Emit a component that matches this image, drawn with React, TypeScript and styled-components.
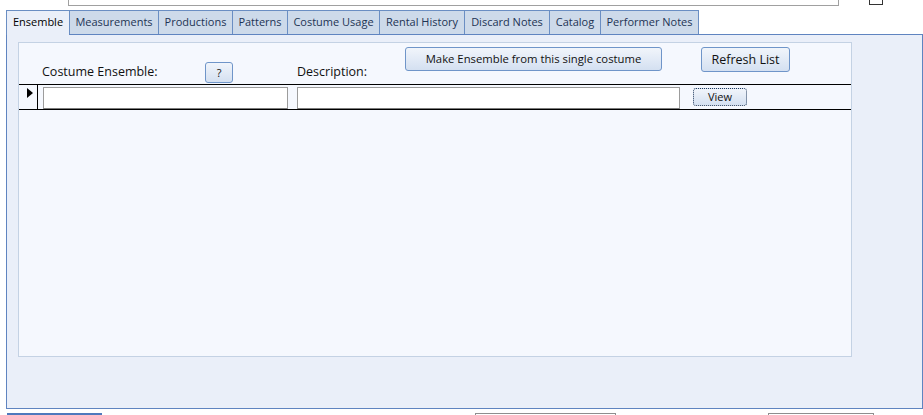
import styled, { createGlobalStyle } from "styled-components";

const GlobalStyle = createGlobalStyle`
  html, body {
    margin: 0;
    padding: 0;
    background: #ffffff;
  }
  body {
    font-family: "Open Sans", "Noto Sans", sans-serif;
    color: #111;
  }
`;

const Screen = styled.div`
  width: 923px;
  height: 415px;
  overflow: hidden;
  background: #ffffff;
  display: flex;
  flex-direction: column;
`;

// the cut-off controls above the tab control
const TopRow = styled.div`
  display: flex;
  height: 10px;
`;

const CutBox = styled.div<{ $left: number; $width: number; $height: number }>`
  box-sizing: border-box;
  margin-left: ${(p) => p.$left}px;
  width: ${(p) => p.$width}px;
  height: ${(p) => p.$height}px;
  border: 1px solid ${(p) => (p.$height < 6 ? "#333" : "#a0a0a0")};
  border-top: none;
  background: #fff;
`;

const TabStrip = styled.div`
  display: flex;
  align-items: flex-start;
  height: 24px;
  margin-left: 6px;
`;

const Tab = styled.div<{ $w: number; $active?: boolean; $last?: boolean }>`
  box-sizing: border-box;
  position: relative;
  z-index: ${(p) => (p.$active ? 2 : 1)};
  width: ${(p) => p.$w}px;
  height: ${(p) => (p.$active ? 25 : 24)}px;
  border-top: 1px solid #6a8ec3;
  border-left: 1px solid #6a8ec3;
  border-right: ${(p) => (p.$last ? "1px solid #6a8ec3" : "none")};
  background: ${(p) => (p.$active ? "#eaeff9" : "#cddaea")};
  color: ${(p) => (p.$active ? "#000" : "#1d3454")};
  font-size: 11px;
  line-height: 22px;
  text-align: center;
  white-space: nowrap;
`;

const Panel = styled.div`
  box-sizing: border-box;
  width: 917px;
  height: 375px;
  margin-left: 6px;
  border: 1px solid #5f84c0;
  background: #eaeff9;
  padding: 7px 0 0 11px;
`;

const Subform = styled.div`
  box-sizing: border-box;
  width: 834px;
  height: 315px;
  border: 1px solid #c4d2e4;
  background: #f5f8fe;
  display: flex;
  flex-direction: column;
`;

const Header = styled.div`
  display: flex;
  align-items: flex-start;
  height: 41px;
  border-bottom: 1px solid #000;
`;

const Label = styled.div<{ $left: number; $width: number }>`
  margin-left: ${(p) => p.$left}px;
  margin-top: 20px;
  width: ${(p) => p.$width}px;
  font-size: 12.5px;
  line-height: 17px;
  white-space: nowrap;
  color: #111;
`;

const Button = styled.button<{
  $left: number;
  $top: number;
  $w: number;
  $h: number;
  $size: number;
  $focus?: boolean;
}>`
  box-sizing: border-box;
  margin: ${(p) => p.$top}px 0 0 ${(p) => p.$left}px;
  width: ${(p) => p.$w}px;
  height: ${(p) => p.$h}px;
  padding: 0;
  border: 1px ${(p) => (p.$focus ? "dotted #223a5c" : "solid #6f95c9")};
  border-radius: 3px;
  background: linear-gradient(#f1f5fb, #d4e0f1);
  font-family: "Open Sans", "Noto Sans", sans-serif;
  font-size: ${(p) => p.$size}px;
  line-height: ${(p) => p.$h - 4}px;
  color: #111;
  white-space: nowrap;
`;

const Row = styled.div`
  display: flex;
  align-items: flex-start;
  height: 24px;
  border-bottom: 1px solid #000;
`;

const Selector = styled.div`
  box-sizing: border-box;
  width: 19px;
  height: 24px;
  border-right: 1px solid #000;
  display: flex;
  align-items: flex-start;
  padding: 3px 0 0 8px;
`;

const TextBox = styled.div<{ $left: number; $width: number }>`
  box-sizing: border-box;
  margin: 2px 0 0 ${(p) => p.$left}px;
  width: ${(p) => p.$width}px;
  height: 22px;
  border: 1px solid #9c9c9c;
  border-bottom-color: #7c7c7c;
  background: #ffffff;
`;

const BottomRow = styled.div`
  display: flex;
  margin-top: 4px;
  height: 2px;
`;

const BottomEdge = styled.div<{ $left: number; $width: number; $blue?: boolean }>`
  box-sizing: border-box;
  margin-left: ${(p) => p.$left}px;
  width: ${(p) => p.$width}px;
  height: 2px;
  border: 1px solid ${(p) => (p.$blue ? "#4f79bd" : "#8e8e8e")};
  border-bottom: none;
  background: ${(p) => (p.$blue ? "#4f79bd" : "#fff")};
`;

const tabs = [
  { label: "Ensemble", w: 63 },
  { label: "Measurements", w: 89 },
  { label: "Productions", w: 74 },
  { label: "Patterns", w: 55 },
  { label: "Costume Usage", w: 92 },
  { label: "Rental History", w: 85 },
  { label: "Discard Notes", w: 85 },
  { label: "Catalog", w: 51 },
  { label: "Performer Notes", w: 99 },
];

export default function App() {
  return (
    <Screen>
      <GlobalStyle />
      <TopRow>
        <CutBox $left={68} $width={771} $height={6} />
        <CutBox $left={30} $width={14} $height={5} />
      </TopRow>

      <TabStrip>
        {tabs.map((t, i) => (
          <Tab key={t.label} $w={t.w} $active={i === 0} $last={i === tabs.length - 1}>
            {t.label}
          </Tab>
        ))}
      </TabStrip>

      <Panel>
        <Subform>
          <Header>
            <Label $left={23} $width={163}>Costume Ensemble:</Label>
            <Button $left={0} $top={19} $w={28} $h={21} $size={11}>?</Button>
            <Label $left={64} $width={108}>Description:</Label>
            <Button $left={0} $top={4} $w={257} $h={24} $size={11.3}>
              Make Ensemble from this single costume
            </Button>
            <Button $left={39} $top={4} $w={89} $h={25} $size={12.5}>
              Refresh List
            </Button>
          </Header>
          <Row>
            <Selector>
              <svg width="6" height="10" viewBox="0 0 6 10">
                <path d="M0 0 L6 5 L0 10 Z" fill="#000" />
              </svg>
            </Selector>
            <TextBox $left={5} $width={245} />
            <TextBox $left={9} $width={383} />
            <Button $left={13} $top={3} $w={54} $h={18} $size={11} $focus>
              View
            </Button>
          </Row>
        </Subform>
      </Panel>

      <BottomRow>
        <BottomEdge $left={7} $width={95} $blue />
        <BottomEdge $left={373} $width={141} />
        <BottomEdge $left={152} $width={106} />
      </BottomRow>
    </Screen>
  );
}
